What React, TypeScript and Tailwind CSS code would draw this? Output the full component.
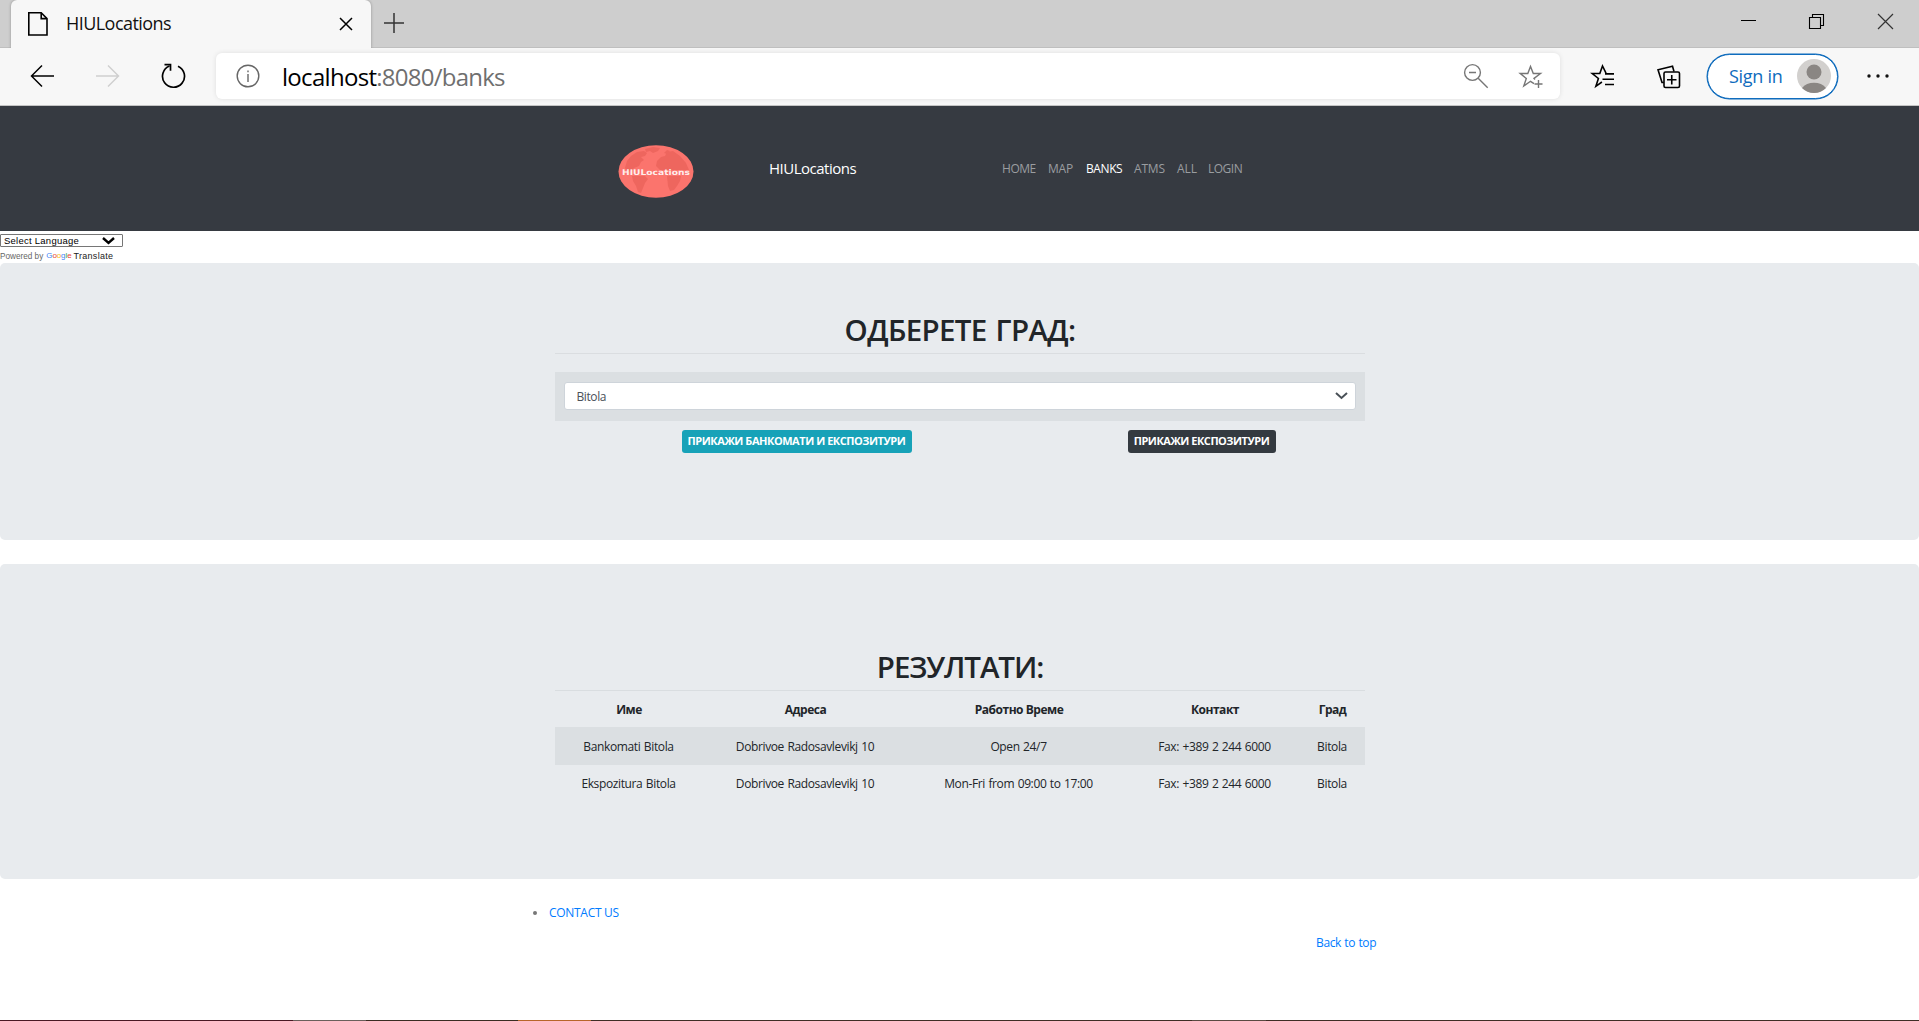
import type { ReactNode } from "react";

const navItems = [
  { label: "HOME", cls: "w-[46px] tracking-[-0.45px] text-[#9a9da0]" },
  { label: "MAP", cls: "w-[38px] tracking-[-0.2px] text-[#9a9da0]" },
  { label: "BANKS", cls: "w-[48px] tracking-[-0.4px] text-white" },
  { label: "ATMS", cls: "w-[43px] tracking-[-0.2px] text-[#9a9da0]" },
  { label: "ALL", cls: "w-[31px] tracking-[-0.1px] text-[#9a9da0]" },
  { label: "LOGIN", cls: "w-[40px] tracking-[-0.5px] text-[#9a9da0]" },
];

const columns = [
  { title: "Име", cls: "w-[148px]" },
  { title: "Адреса", cls: "w-[205px]" },
  { title: "Работно Време", cls: "w-[222px]" },
  { title: "Контакт", cls: "w-[170px]" },
  { title: "Град", cls: "w-[65px]" },
];

const rows = [
  ["Bankomati Bitola", "Dobrivoe Radosavlevikj 10", "Open 24/7", "Fax: +389 2 244 6000", "Bitola"],
  ["Ekspozitura Bitola", "Dobrivoe Radosavlevikj 10", "Mon-Fri from 09:00 to 17:00", "Fax: +389 2 244 6000", "Bitola"],
];

function Icon({ className, children, w = 24, h = 24, stroke = 1.5 }: { className?: string; children: ReactNode; w?: number; h?: number; stroke?: number }) {
  return (
    <svg className={`shrink-0 ${className ?? ""}`} width={w} height={h} viewBox={`0 0 ${w} ${h}`} fill="none" stroke="currentColor" strokeWidth={stroke}>
      {children}
    </svg>
  );
}

function TabStrip() {
  return (
    <div className="flex h-[48px] items-start border-b border-[#bfbfbf] bg-[#cecece]">
      <div className="relative z-10 ml-[11px] flex h-[48px] w-[360px] shrink-0 items-start rounded-t-[6px] bg-[#f7f7f7] shadow-[0_0_3px_rgba(0,0,0,0.3)] [clip-path:inset(-4px_-4px_0_-4px)]">
        <Icon className="ml-[16px] mt-[12px] text-black" w={22} h={24} stroke={1.6}>
          <path d="M1.8 0.8h12.4l5.8 5.8v16.4H1.8z" />
          <path d="M14.2 0.8v5.8h5.8" />
        </Icon>
        <span className="ml-[17px] mt-[11px] text-[18px] leading-[24px] tracking-[-0.55px] text-[#111]">HIULocations</span>
        <Icon className="ml-auto mr-[18px] mt-[17px] text-black" w={14} h={14}>
          <path d="M1 1l12 12M13 1L1 13" />
        </Icon>
      </div>
      <Icon className="ml-[12px] mt-[12px] text-[#333]" w={22} h={22}>
        <path d="M11 1v20M1 11h20" />
      </Icon>
      <div className="ml-auto flex pr-[25px] pt-[13px] text-black">
        <Icon className="mr-[51px]" w={17} h={17} stroke={1}>
          <path d="M1 7.500h15" />
        </Icon>
        <Icon className="mr-[52px]" w={17} h={17} stroke={1.1}>
          <path d="M1.500 4.500h11v11h-11z" />
          <path d="M4.500 4.500v-3h11v11h-3" />
        </Icon>
        <Icon className="text-[#333]" w={17} h={17} stroke={1.2}>
          <path d="M1 1l15 15M16 1L1 16" />
        </Icon>
      </div>
    </div>
  );
}

function Toolbar() {
  return (
    <div className="flex h-[58px] items-center border-b border-[#c4c4c4] bg-[#f7f7f7] pb-px">
      <Icon className="ml-[30px] text-black" w={25} h={24}>
        <path d="M24 12H1.500M12 1.500L1.500 12 12 22.500" />
      </Icon>
      <Icon className="ml-[41px] text-[#cfcfcf]" w={25} h={24}>
        <path d="M0 12h22.500M12 1.500L22.500 12 12 22.500" />
      </Icon>
      <Icon className="ml-[40px] text-black" w={26} h={26} stroke={1.7}>
        <path d="M17 3.200A11 11 0 1 1 8.500 3" />
        <path d="M3.500 1.700h6v6" />
      </Icon>
      <div className="ml-[29px] flex h-[46px] w-[1344px] shrink-0 items-center rounded-[6px] bg-white shadow-[0_0_5px_rgba(0,0,0,0.1)]">
        <Icon className="ml-[20px] text-[#666]" w={24} h={24} stroke={1.4}>
          <circle cx="12" cy="12" r="10.800" />
          <path d="M12 10v8M12 6.500v1.800" />
        </Icon>
        <div className="ml-[22px] mt-[2px] flex text-[24px] leading-[34px] text-[#6f6f6f]">
          <span className="tracking-[-0.7px] text-black">localhost</span>
          <span className="tracking-[-0.75px]">:8080/banks</span>
        </div>
        <Icon className="ml-auto text-[#767676]" w={26} h={26} stroke={1.4}>
          <circle cx="9.500" cy="9.500" r="7.900" />
          <path d="M6 9.500h7M15.200 15.200l9.500 9.500" />
        </Icon>
        <Icon className="ml-[29px] mr-[16px] mt-[2px] text-[#767676]" w={26} h={26} stroke={1.4}>
          <path d="M17 15.500l-1-1.100 6.500-4.900h-7.200L12.500 2.500 9.800 9.500H2.200l6.100 4.900-2.500 7.600 6.700-4.700 3.500 2.400" />
          <path d="M20.500 16v8M16.500 20h8" />
        </Icon>
      </div>
      <Icon className="ml-[30px] mt-[2px] text-black" w={26} h={26} stroke={1.600}>
        <path d="M16 9.200L12.500 2 9.800 9.500H2.200l6.200 5-2.500 7.800 6-4.300" />
        <path d="M15 9.900h9M12.500 15.200h11.500M15 20.500h9" />
      </Icon>
      <Icon className="ml-[41px] mt-[2px] text-black" w={24} h={24} stroke={1.600}>
        <rect x="7" y="7" width="15.500" height="15.500" rx="1.500" />
        <path d="M14.750 10v9.500M10 14.750h9.500M6.800 17.500H5L1 4.800 15.500 1.200 17 6.500" />
      </Icon>
      <div className="ml-[26px] flex h-[45px] w-[131px] shrink-0 items-center rounded-full border border-[#0f6cbd] bg-white ring-[0.5px] ring-[#0f6cbd]">
        <span className="ml-[21px] text-[18px] leading-[24px] tracking-[-0.28px] text-[#0f6cbd]">Sign in</span>
        <svg className="ml-auto mr-[6px]" width="34" height="34" viewBox="0 0 34 34">
          <circle cx="17" cy="17" r="17" fill="#d2d0ce" />
          <circle cx="17" cy="13" r="7.500" fill="#8a8683" />
          <path d="M5 29a14 11 0 0 1 24 0 17 17 0 0 1-24 0z" fill="#8a8683" />
        </svg>
      </div>
      <svg className="ml-[28px]" width="26" height="6" viewBox="0 0 26 6" fill="#111">
        <circle cx="3" cy="3" r="1.700" />
        <circle cx="12" cy="3" r="1.700" />
        <circle cx="21" cy="3" r="1.700" />
      </svg>
    </div>
  );
}

function Logo() {
  return (
    <svg className="shrink-0" width="76" height="54" viewBox="0 0 76 54">
      <ellipse cx="38" cy="26.500" rx="37.500" ry="26.300" fill="#fb746d" />
      <g fill="#ee665e">
        <path d="M9 16l4-5 6-4 7-1 3 2-2 3-4 1 3 3-3 2-2 4-5 2-3 3-3 1-3-4z" />
        <path d="M27 4l8-2 7 1-2 3-5 2-3-2-4 1z" />
        <path d="M39 16l4-4 4-1 2-4 6-1 7 5 6 7 3 7H42l-4-4z" />
        <path d="M46 8l3-3 3 1-3 3z" />
        <path d="M14 31h13l3 3-3 4-2 5-2 5-3-1-2-6-3-5z" />
        <path d="M49 31h14l-1 5-3 5-3 4-4 1-2-5z" />
      </g>
      <text x="38" y="29.500" textAnchor="middle" textLength="68" lengthAdjust="spacingAndGlyphs" fontFamily="DejaVu Sans" fontWeight="700" fontSize="7.800" fill="#fff" fillOpacity="0.88">
        HIULocations
      </text>
    </svg>
  );
}

function SiteNav() {
  return (
    <nav className="flex h-[125px] items-start bg-[#363a41]">
      <div className="ml-[618px] mt-[39px]">
        <Logo />
      </div>
      <span className="ml-[75px] mt-[51px] w-[233px] text-[15px] leading-[22px] tracking-[-0.5px] text-white">HIULocations</span>
      <div className="mt-[52px] flex">
        {navItems.map((n) => (
          <a key={n.label} className={`text-[12px] leading-[21px] ${n.cls}`}>{n.label}</a>
        ))}
      </div>
    </nav>
  );
}

function TranslateWidget() {
  return (
    <div className="flex h-[32px] flex-col items-start pt-[3px] font-['Liberation_Sans']">
      <div className="flex h-[13px] w-[123px] items-center rounded-[1px] border border-[#767676] bg-white pl-[3px] pr-[7px] text-[9.500px] leading-[11px] tracking-[0.25px] text-black">
        <span>Select Language</span>
        <Icon className="ml-auto" w={13} h={8} stroke={2.400}>
          <path d="M1 1l5.500 5L12 1" />
        </Icon>
      </div>
      <div className="mt-[2px] flex items-center text-[8.200px] leading-[12px] text-[#666]">
        <span className="mt-[2px]">Powered by</span>
        <span className="ml-[3px] text-[8px] font-medium leading-[10px] tracking-[-0.1px]">
          <span className="text-[#4285f4]">G</span>
          <span className="text-[#ea4335]">o</span>
          <span className="text-[#fbbc05]">o</span>
          <span className="text-[#4285f4]">g</span>
          <span className="text-[#34a853]">l</span>
          <span className="text-[#ea4335]">e</span>
        </span>
        <span className="ml-[2px] text-[9px] tracking-[0.300px] text-[#222]">Translate</span>
      </div>
    </div>
  );
}

function CityPicker() {
  return (
    <section className="flex h-[277px] flex-col items-center rounded-[5px] bg-[#e8ebee]">
      <div className="w-[810px]">
        <h1 className="mt-[46px] h-[45px] border-b border-[#dadde0] pl-px text-center text-[29.500px] font-semibold leading-[41px] tracking-[-0.650px] [word-spacing:2px]">ОДБЕРЕТЕ ГРАД:</h1>
        <div className="mt-[18px] h-[49px] bg-[#dbdfe2] px-[9px] pt-[10px]">
          <div className="flex h-[28px] items-center rounded-[3px] border border-[#ced4da] bg-white pl-[12px] pr-[7px] text-[12px] leading-[18px] tracking-[-0.4px] text-[#495057]">
            <span className="mt-[2px]">Bitola</span>
            <Icon className="ml-auto text-[#495057]" w={13} h={8} stroke={2}>
              <path d="M1 1l5.500 5L12 1" />
            </Icon>
          </div>
        </div>
        <div className="mt-[9px] flex">
          <button className="ml-[127px] h-[23px] w-[230px] whitespace-nowrap rounded-[3px] bg-[#17a2b8] pb-[2px] text-[11px] font-bold leading-[21px] tracking-[-0.460px] text-white">ПРИКАЖИ БАНКОМАТИ И ЕКСПОЗИТУРИ</button>
          <button className="ml-[216px] h-[23px] w-[148px] whitespace-nowrap rounded-[3px] bg-[#343a40] pb-[2px] text-[11px] font-bold leading-[21px] tracking-[-0.480px] text-white">ПРИКАЖИ ЕКСПОЗИТУРИ</button>
        </div>
      </div>
    </section>
  );
}

function Results() {
  return (
    <section className="mt-[24px] flex h-[315px] flex-col items-center rounded-[5px] bg-[#e8ebee]">
      <h1 className="mt-[83px] h-[43px] w-[810px] pl-px text-center text-[29.500px] font-semibold leading-[40px] tracking-[-1.100px]">РЕЗУЛТАТИ:</h1>
      <table className="w-[810px] table-fixed border-collapse text-center text-[12px] leading-[18px]">
        <thead>
          <tr className="h-[37px] border-t border-[#d9dde0]">
            {columns.map((c) => (
              <th key={c.title} className={`pl-px pt-px font-bold tracking-[-0.480px] ${c.cls}`}>{c.title}</th>
            ))}
          </tr>
        </thead>
        <tbody>
          {rows.map((r, i) => (
            <tr key={i} className="h-[37px] border-t border-[#dbdfe2] odd:bg-[#dbdfe2]">
              {r.map((cell, j) => (
                <td key={j} className="whitespace-nowrap pt-[2px] tracking-[-0.370px] [word-spacing:0.700px]">{cell}</td>
              ))}
            </tr>
          ))}
        </tbody>
      </table>
    </section>
  );
}

function Footer() {
  return (
    <footer className="flex h-[141px] flex-col items-start text-[12px] leading-[18px] text-[#007bff]">
      <div className="ml-[533px] mt-[25px] flex items-center">
        <span className="size-[4px] rounded-full bg-[#777]" />
        <a className="ml-[12px] tracking-[-0.300px]">CONTACT US</a>
      </div>
      <a className="ml-[1316px] mt-[12px] tracking-[-0.350px] [word-spacing:0.500px]">Back to top</a>
    </footer>
  );
}

export default function App() {
  return (
    <div className="h-[1021px] w-[1919px] overflow-hidden bg-white font-['Open_Sans','Noto_Sans',sans-serif] text-[#212529]">
      <TabStrip />
      <Toolbar />
      <SiteNav />
      <TranslateWidget />
      <CityPicker />
      <Results />
      <Footer />
      <div className="flex h-px">
        <div className="w-[293px] bg-[#4a1824]" />
        <div className="w-[73px] bg-[#6a5f5b]" />
        <div className="w-[152px] bg-[#3a2c22]" />
        <div className="w-[73px] bg-[#b8662a]" />
        <div className="w-[601px] bg-[#3f2d25]" />
        <div className="w-[74px] bg-[#5a4a42]" />
        <div className="grow bg-[#3f2d25]" />
      </div>
    </div>
  );
}
